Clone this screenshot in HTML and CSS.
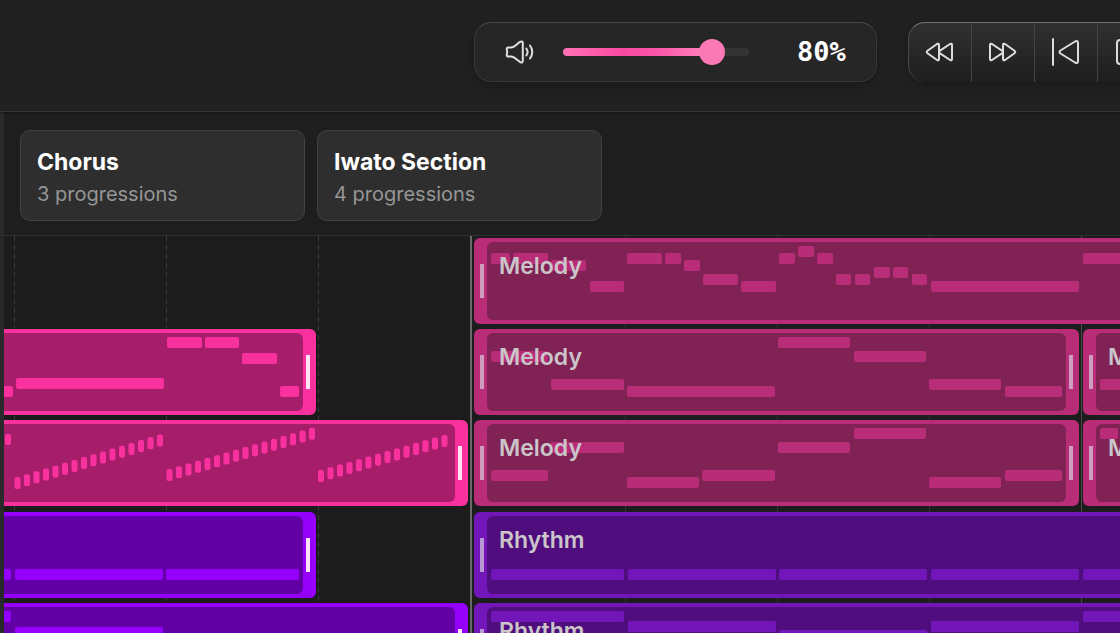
FILE: index.html
```html
<!DOCTYPE html>
<html lang="en">
<head>
<meta charset="utf-8">
<meta name="viewport" content="width=device-width, initial-scale=1">
<title>Arrangement</title>
<link rel="stylesheet" href="styles.css">
</head>
<body>
<header class="toolbar">
  <div class="volume">
    <svg class="volume-icon" width="30" height="26" viewBox="0 0 30 26" aria-hidden="true">
      <path d="M3.500 8.500H6C9.500 8.500 12 4.500 15.500 2.700Q17.800 2 17.800 4V22Q17.800 24 15.500 23.300C12 21.500 9.500 17.500 6 17.500H3.500Q1.500 17.500 1.800 15.500Q2.500 13 1.800 10.500Q1.500 8.500 3.500 8.500Z"/>
      <path d="M21.300 9.500Q23.900 13 21.300 16.500"/>
      <path d="M25 6.500Q29.500 13 25 19.500"/>
    </svg>
    <div class="slider">
      <input class="slider-input" id="volume" type="range" min="0" max="100" value="80" aria-label="Volume">
    </div>
    <output class="volume-value" for="volume">80%</output>
  </div>
  <div class="transport">
    <button class="transport-button" type="button" aria-label="Rewind">
      <svg width="30" height="28" viewBox="0 0 30 28"><path d="M14 7V21Q14 23 12 22L2.500 15.300Q1 14 2.500 12.700L12 6Q14 5 14 7Z"/><path d="M14.300 13.200L25 6Q27 5 27 7V21Q27 23 25 22L14.300 14.800"/></svg>
    </button>
    <button class="transport-button" type="button" aria-label="Fast forward">
      <svg width="30" height="28" viewBox="0 0 30 28"><path d="M15 7V21Q15 23 17 22L26.500 15.300Q28 14 26.500 12.700L17 6Q15 5 15 7Z"/><path d="M14.700 13.200L4 6Q2 5 2 7V21Q2 23 4 22L14.700 14.800"/></svg>
    </button>
    <button class="transport-button" type="button" aria-label="Go to start">
      <svg width="30" height="28" viewBox="0 0 30 28"><path d="M2 1V27"/><path d="M27 5V23Q27 26 24 24.500L9.500 15.500Q7.500 14 9.500 12.500L24 3.500Q27 2 27 5Z"/></svg>
    </button>
    <button class="transport-button" type="button" aria-label="Stop">
      <svg width="28" height="28" viewBox="0 0 28 28"><rect x="2" y="2" width="24" height="24" rx="3"/></svg>
    </button>
  </div>
</header>
<main class="workspace">
  <section class="sections" aria-label="Sections">
    <button class="section-card" type="button"><span class="section-name">Chorus</span><span class="section-info">3 progressions</span></button>
    <button class="section-card" type="button"><span class="section-name">Iwato Section</span><span class="section-info">4 progressions</span></button>
  </section>
  <section class="timeline" aria-label="Timeline">
    <svg class="bars" aria-hidden="true">
      <path class="bar-line dashed" d="M10.500 0V900M162.500 0V900M314.500 0V900"/>
      <path class="bar-line" d="M621.500 0V900M773.500 0V900M925.500 0V900"/>
      <path class="bar-line part" d="M1077.500 0V900"/>
      <path class="bar-line current" d="M467 0V900"/>
    </svg>
    <div class="track-group melody">
      <div class="lane">
        <article class="clip muted whole open-end"><i class="grip start"></i><div class="clip-body"><svg class="notes" data-origin="487" data-notes="491 11 19,513 11 35,551 18 35,590 39 34,627 11 35,665 11 16,684 18 16,703 32 35,741 39 35,779 11 16,798 4 16,817 11 16,836 32 15,855 32 15,874 25 16,893 25 15,912 32 15,931 39 148,1083 11 148"></svg><h3 class="clip-name">Melody</h3></div></article>
      </div>
      <div class="lane">
        <article class="clip short open-start"><div class="clip-body"><svg class="notes" data-origin="4" data-notes="-2 53 15,16 45 148,167 4 35,205 4 34,242 20 35,280 53 19"></svg></div><i class="grip end"></i></article>
        <article class="clip muted second"><i class="grip start"></i><div class="clip-body"><svg class="notes" data-origin="487" data-notes="491 18 57,551 46 73,627 53 148,778 4 72,854 18 72,929 46 72,1005 53 57"></svg><h3 class="clip-name">Melody</h3></div><i class="grip end"></i></article>
        <article class="clip muted third open-end"><i class="grip start"></i><div class="clip-body"><svg class="notes" data-origin="1096" data-notes="1100 46 57"></svg><h3 class="clip-name">Melody</h3></div></article>
      </div>
      <div class="lane">
        <article class="clip long open-start"><div class="clip-body"><svg class="notes" data-origin="4" data-notes="5 10 6" data-runs="14.5 53 16 2.84,166.500 45 16 2.75,318 46 14 2.7"></svg></div><i class="grip end"></i></article>
        <article class="clip muted second"><i class="grip start"></i><div class="clip-body"><svg class="notes" data-origin="487" data-notes="491 46 57,551 18 73,627 53 72,702 46 73,778 18 72,854 4 72,929 53 72,1005 46 57"></svg><h3 class="clip-name">Melody</h3></div><i class="grip end"></i></article>
        <article class="clip muted third open-end"><i class="grip start"></i><div class="clip-body"><svg class="notes" data-origin="1096" data-notes="1100 4 18"></svg><h3 class="clip-name">Melody</h3></div></article>
      </div>
    </div>
    <div class="track-group rhythm">
      <div class="lane">
        <article class="clip short open-start"><div class="clip-body"><svg class="notes" data-origin="4" data-notes="-2 53 13,15 53 148,166 53 133"></svg></div><i class="grip end"></i></article>
        <article class="clip muted whole open-end"><i class="grip start"></i><div class="clip-body"><svg class="notes" data-origin="487" data-notes="491 53 133,628 53 148,779 53 148,931 53 148,1083 53 148"></svg><h3 class="clip-name">Rhythm</h3></div></article>
      </div>
      <div class="lane">
        <article class="clip long open-start"><div class="clip-body"><svg class="notes" data-origin="4" data-notes="-2 4 13,15 20 148"></svg></div><i class="grip end"></i></article>
        <article class="clip muted whole open-end"><i class="grip start"></i><div class="clip-body"><svg class="notes" data-origin="487" data-notes="491 4 133,628 14 148,779 23 148,931 14 148,1083 4 148"></svg><h3 class="clip-name">Rhythm</h3></div></article>
      </div>
    </div>
  </section>
</main>
<script src="notes.js"></script>
</body>
</html>
```

FILE: styles.css
```css
* { box-sizing: border-box; }

body {
  display: flex;
  flex-direction: column;
  height: 100vh;
  margin: 0;
  overflow: hidden;
  background: #1c1c1c;
  color: #fff;
  font-family: Inter, "Liberation Sans", sans-serif;
}

button { font: inherit; color: inherit; cursor: pointer; }

.toolbar {
  display: flex;
  flex: none;
  gap: 31px;
  padding: 22px 0 29px 474px;
  border-bottom: 1px solid #343434;
  background: #212121;
}

.volume {
  display: flex;
  flex: none;
  align-items: center;
  height: 60px;
  padding: 0 30px;
  border: 1px solid #383838;
  border-top-color: #484848;
  border-radius: 17px;
  background: #262626;
  box-shadow: 0 4px 10px #1a1a1a;
}

.volume-icon {
  fill: none;
  stroke: #dedede;
  stroke-width: 2;
  stroke-linecap: round;
  stroke-linejoin: round;
}

.slider {
  display: grid;
  align-items: center;
  width: 186px;
  margin-left: 28px;
}

.slider::before {
  content: "";
  grid-area: 1 / 1;
  height: 8px;
  border-radius: 4px;
  background: linear-gradient(90deg, #ff72b6 0, #f94aa1 32%, #fb55a8 50%, #ff7fbc 75%, #343434 80%);
}

.slider-input {
  grid-area: 1 / 1;
  width: auto;
  height: 26px;
  margin: 0 -13px;
  appearance: none;
  background: none;
}

.slider-input::-webkit-slider-thumb {
  width: 26px;
  height: 26px;
  appearance: none;
  border-radius: 50%;
  background: #fb7ab6;
}

.volume-value {
  margin-left: 48px;
  font: bold 27px/32px "DejaVu Sans Mono", monospace;
}

.transport {
  display: flex;
  flex: none;
  height: 60px;
  overflow: hidden;
  border-top: 1px solid #727272;
  border-left: 1px solid #4a4a4a;
  border-radius: 17px;
  background: linear-gradient(#303030, #1e1e1e);
  box-shadow: 0 4px 10px #1a1a1a;
}

.transport-button {
  display: grid;
  place-items: center;
  width: 63px;
  padding: 0 0 2px;
  border: 0;
  border-right: 1px solid #444;
  background: none;
}

.transport-button svg {
  fill: none;
  stroke: #dcdcdc;
  stroke-width: 2;
  stroke-linecap: round;
  stroke-linejoin: round;
}

.workspace {
  display: flex;
  flex: 1;
  flex-direction: column;
  min-height: 0;
  border-top: 2px solid #181818;
  border-left: 4px solid #292929;
}

.sections {
  display: flex;
  flex: none;
  gap: 12px;
  padding: 16px 16px 14px;
  border-bottom: 1px solid #313131;
  background: #1e1e1e;
}

.section-card {
  display: flex;
  flex-direction: column;
  width: 285px;
  padding: 15px 16px 10px;
  border: 1px solid #424242;
  border-radius: 10px;
  background: #2e2e2e;
  text-align: left;
}

.section-name { font-size: 23px; font-weight: 700; line-height: 32px; }
.section-info { color: #969696; font-size: 20px; line-height: 32px; }

.timeline {
  position: relative;
  display: flex;
  flex: 1;
  flex-direction: column;
  gap: 6px;
  min-height: 0;
  padding-top: 2px;
  overflow: hidden;
}

.bars {
  position: absolute;
  inset: 0;
  width: 100%;
  height: 100%;
}

.bar-line { stroke: #303030; stroke-width: 1; }
.bar-line.dashed { stroke: #383838; stroke-dasharray: 5 4; }
.bar-line.part { stroke: #4a4a4a; }
.bar-line.current { stroke: #696969; stroke-width: 2; }

.track-group {
  position: relative;
  display: flex;
  flex-direction: column;
  flex: none;
  gap: 5px;
}

.melody {
  --edge: #f8319e;
  --fill: #a61e69;
  --muted-edge: #b92c77;
  --muted-fill: #802254;
}

.rhythm {
  --edge: #9400fa;
  --fill: #6200a5;
  --muted-edge: #7216b9;
  --muted-fill: #500d7e;
}

.lane {
  display: grid;
  grid-template-columns: 466px 605px 1fr;
  gap: 4px;
  height: 86px;
}

.clip {
  display: flex;
  align-items: center;
  min-width: 0;
  padding: 4px 0;
  overflow: hidden;
  border-radius: 6px;
  background: var(--edge);
}

.clip.muted { --edge: var(--muted-edge); --fill: var(--muted-fill); }
.clip.short { width: 312px; }
.clip.long { width: 464px; }
.clip.second { grid-column: 2; }
.clip.third { grid-column: 3; }
.clip.whole { grid-column: 2 / -1; }
.clip.open-start { border-top-left-radius: 0; border-bottom-left-radius: 0; }
.clip.open-end { border-top-right-radius: 0; border-bottom-right-radius: 0; }

.clip-body {
  display: grid;
  flex: 1;
  align-self: stretch;
  min-width: 0;
  overflow: hidden;
  border-radius: 6px;
  background: var(--fill);
}

.open-start .clip-body { border-top-left-radius: 0; border-bottom-left-radius: 0; }
.open-end .clip-body { border-top-right-radius: 0; border-bottom-right-radius: 0; }

.notes {
  grid-area: 1 / 1;
  width: 100%;
  height: 78px;
  fill: var(--edge);
}

.clip-name {
  grid-area: 1 / 1;
  z-index: 1;
  margin: 8px 0 0 12px;
  color: #cbc5ca;
  font-size: 23px;
  font-weight: 600;
  line-height: 32px;
}

.grip {
  flex: none;
  width: 4px;
  height: 34px;
  background: #ffe3f5;
}

.muted .grip { background: #cf9fbf; }
.rhythm .muted .grip { background: #b897d3; }
.grip.start { margin: 0 3px 0 6px; }
.grip.end { margin: 0 6px 0 3px; }
```

FILE: notes.js
```js
const NOTE_HEIGHT = 11;
const STEP = 9.5;

function addNote(svg, x, y, width, height) {
  const rect = document.createElementNS("http://www.w3.org/2000/svg", "rect");
  rect.setAttribute("x", x);
  rect.setAttribute("y", y);
  rect.setAttribute("width", width);
  rect.setAttribute("height", height);
  rect.setAttribute("rx", 2);
  svg.append(rect);
}

function parse(list) {
  return (list || "").split(",").filter(Boolean).map((item) => item.split(" ").map(Number));
}

document.querySelectorAll(".notes").forEach((svg) => {
  const origin = Number(svg.dataset.origin);
  parse(svg.dataset.notes).forEach(([x, y, width]) => addNote(svg, x - origin, y, width, NOTE_HEIGHT));
  // A run is a rising series of short notes: start, pitch, count, rise per note.
  parse(svg.dataset.runs).forEach(([x, y, count, rise]) => {
    for (let i = 0; i < count; i += 1) {
      addNote(svg, x - origin + i * STEP, y - i * rise, 6, NOTE_HEIGHT + 1);
    }
  });
});
```
